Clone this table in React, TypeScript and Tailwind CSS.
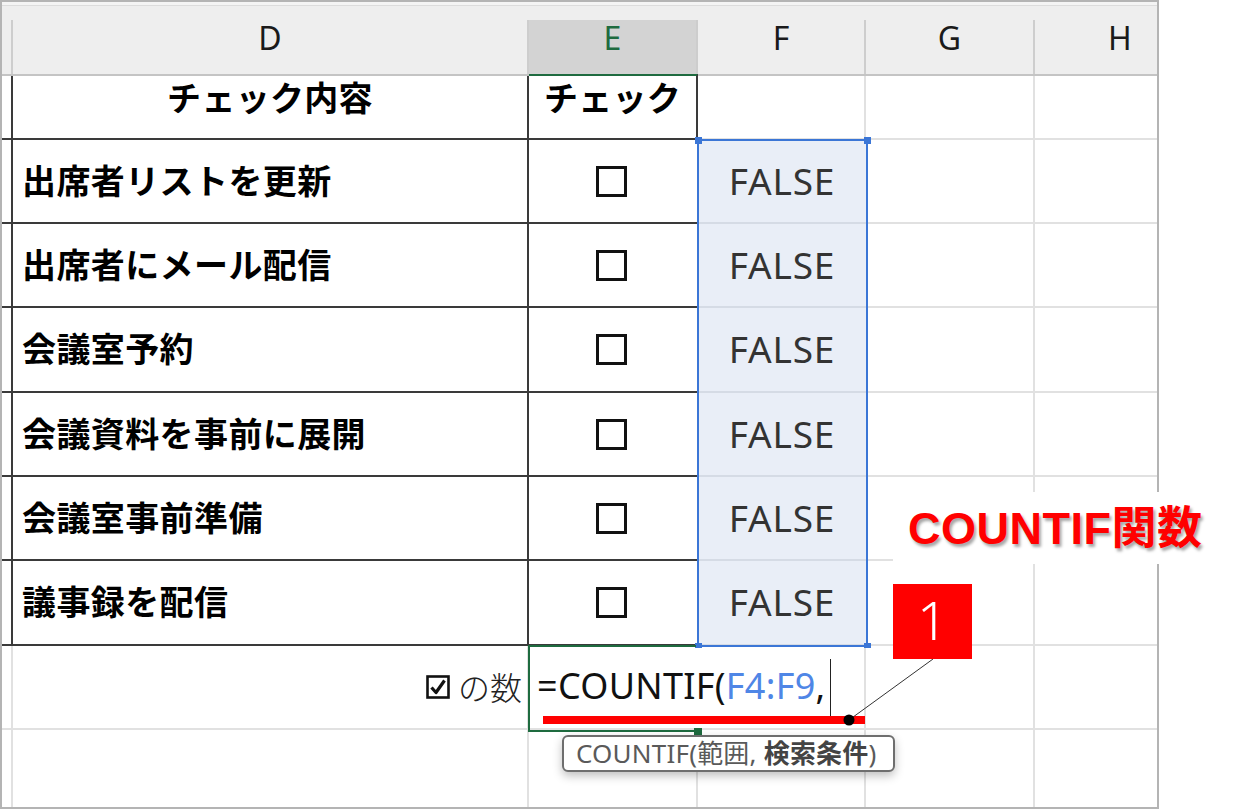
import React from "react";

const JP = "font-['Noto_Sans_CJK_JP','Noto_Sans',sans-serif]";
const LAT = "font-['Noto_Sans','Noto_Sans_CJK_JP',sans-serif]";

const items = [
  { t: "出席者リストを更新", h: "h-[84px]" },
  { t: "出席者にメール配信", h: "h-[84px]" },
  { t: "会議室予約", h: "h-[85px]" },
  { t: "会議資料を事前に展開", h: "h-[84px]" },
  { t: "会議室事前準備", h: "h-[84px]" },
  { t: "議事録を配信", h: "h-[85px]" },
];

function Cell({ className, children }: { className: string; children?: React.ReactNode }) {
  return <div className={"shrink-0 box-border " + className}>{children}</div>;
}

function HeaderCell({ w, label, active }: { w: string; label: string; active?: boolean }) {
  return (
    <div className={"shrink-0 flex flex-col " + w}>
      <div className="h-[14px]" />
      <div
        className={
          "flex-1 flex items-center justify-center pb-[16px] text-[32px] leading-none border-r-2 border-[#cdcdcd] " +
          (active ? "bg-[#d3d3d3] text-[#1e6b3f]" : "text-[#1a1a1a]")
        }
      >
        <span className="-mt-[2px]">{label}</span>
      </div>
    </div>
  );
}

export default function App() {
  const dark = "border-[#3a3a3a]";
  return (
    <div className={"relative w-[1240px] h-[810px] bg-white overflow-hidden " + JP}>
      {/* spreadsheet frame */}
      <div className="w-[1159px] h-[809px] border-2 border-[#b4b4b4] flex flex-col">
        {/* column header */}
        <div className={"h-[74px] shrink-0 bg-[#eeeeee] flex flex-col border-b-2 border-[#c4c4c4] " + LAT}>
          <div className="h-[4px] bg-[#f4f4f4] border-b border-[#dcdcdc]" />
          <div className="flex flex-1">
            <HeaderCell w="w-[11px]" label="" />
            <HeaderCell w="w-[516px]" label="D" />
            <HeaderCell w="w-[169px]" label="E" active />
            <HeaderCell w="w-[168px]" label="F" />
            <HeaderCell w="w-[169px]" label="G" />
            <div className="shrink-0 w-[122px] flex flex-col">
              <div className="h-[14px]" />
              <div className="flex-1 flex items-center pl-[73px] pb-[16px] text-[32px] leading-none text-[#1a1a1a]">
                <span className="-mt-[2px]">H</span>
              </div>
            </div>
          </div>
        </div>

        {/* row 3 */}
        <div className="flex h-[64px] shrink-0">
          <Cell className={"w-[11px] border-r-2 border-b-2 " + dark} />
          <Cell className={"w-[516px] border-r-2 border-b-2 flex justify-center pt-[4px] " + dark}>
            <span className="text-[34px] leading-[34px] font-bold text-black tracking-[0.3px]">チェック内容</span>
          </Cell>
          <Cell className={"w-[169px] border-r-2 border-b-2 flex justify-center pt-[4px] border-t-2 border-t-[#1e6b3f] -mt-[2px] " + dark}>
            <span className="text-[34px] leading-[34px] font-bold text-black tracking-[0.3px]">チェック</span>
          </Cell>
          <Cell className="w-[168px] border-r-2 border-b-2 border-[#e1e1e1]" />
          <Cell className="w-[169px] border-r-2 border-b-2 border-[#e1e1e1]" />
          <Cell className="w-[122px] border-b-2 border-[#e1e1e1]" />
        </div>

        {/* data rows */}
        {items.map((it) => (
          <div key={it.t} className={"flex shrink-0 " + it.h}>
            <Cell className={"w-[11px] border-r-2 border-b-2 " + dark} />
            <Cell className={"w-[516px] border-r-2 border-b-2 flex items-center pl-[9px] " + dark}>
              <span className="text-[34px] leading-none font-bold text-black tracking-[0.4px] -mt-[3px]">{it.t}</span>
            </Cell>
            <Cell className={"w-[169px] border-b-2 flex items-center justify-center pr-[4px] " + dark}>
              <div className="w-[31px] h-[31px] border-[3px] border-[#111]" />
            </Cell>
            <Cell className="w-[168px] bg-[#e9eef7] border-b-2 border-[#d5dbe5] flex items-center justify-center">
              <span className={"text-[37px] leading-none font-normal text-[#333] tracking-[0.8px] -mt-[2px] " + LAT}>FALSE</span>
            </Cell>
            <Cell className="w-[169px] border-r-2 border-b-2 border-[#e1e1e1]" />
            <Cell className="w-[122px] border-b-2 border-[#e1e1e1]" />
          </div>
        ))}

        {/* row 10 */}
        <div className="flex h-[84px] shrink-0">
          <Cell className="w-[11px] border-r-2 border-b-2 border-[#e1e1e1]" />
          <Cell className="w-[516px] border-r-2 border-b-2 border-[#e1e1e1] flex items-center justify-end pr-[5px]">
            <svg width="24" height="24" viewBox="0 0 24 24" className="mr-[8px]">
              <rect x="1.5" y="1.5" width="21" height="21" fill="none" stroke="#111" strokeWidth="2.6" />
              <path d="M5.5 12.5 L10 17.5 L18.5 5.5" fill="none" stroke="#111" strokeWidth="3.2" strokeLinejoin="round" />
            </svg>
            <span className="text-[32px] leading-none font-light text-[#222] -mt-[2px]">の数</span>
          </Cell>
          <Cell className="w-[169px] border-b-2 border-[#e1e1e1] flex items-center pl-[8px] overflow-visible">
            <span className={"whitespace-nowrap text-[36px] leading-none text-[#111] tracking-[0.3px] -mt-[2px] " + LAT}>
              =COUNTIF(<span className="text-[#4f86e6]">F4:F9</span>,
            </span>
          </Cell>
          <Cell className="w-[168px] border-r-2 border-b-2 border-[#e1e1e1]" />
          <Cell className="w-[169px] border-r-2 border-b-2 border-[#e1e1e1]" />
          <Cell className="w-[122px] border-b-2 border-[#e1e1e1]" />
        </div>

        {/* row 11 */}
        <div className="flex flex-1">
          <Cell className="w-[11px] border-r-2 border-[#e1e1e1]" />
          <Cell className="w-[516px] border-r-2 border-[#e1e1e1]" />
          <Cell className="w-[169px] border-r-2 border-[#e1e1e1]" />
          <Cell className="w-[168px] border-r-2 border-[#e1e1e1]" />
          <Cell className="w-[169px] border-r-2 border-[#e1e1e1]" />
          <Cell className="w-[122px]" />
        </div>
      </div>

      {/* selection range F4:F9 */}
      <div className="absolute left-[697px] top-[139px] w-[171px] h-[508px] border-2 border-[#3b76d6] pointer-events-none" />
      <div className="absolute left-[695px] top-[137px] w-[7px] h-[7px] bg-[#3b76d6]" />
      <div className="absolute left-[864px] top-[137px] w-[7px] h-[7px] bg-[#3b76d6]" />
      <div className="absolute left-[695px] top-[643px] w-[7px] h-[5px] bg-[#3b76d6]" />
      <div className="absolute left-[864px] top-[643px] w-[7px] h-[5px] bg-[#3b76d6]" />

      {/* active cell E10 */}
      <div className="absolute left-[528px] top-[645px] w-[168px] h-[87px] border-l-2 border-t-2 border-b-2 border-[#1e6b3f] pointer-events-none" />
      <div className="absolute left-[694px] top-[728px] w-[8px] h-[7px] bg-[#1e6b3f]" />

      {/* caret */}
      <div className="absolute left-[830px] top-[659px] w-[1px] h-[57px] bg-[#222]" />

      {/* annotation drawings */}
      <svg className="absolute left-0 top-0 pointer-events-none" width="1240" height="810">
        <rect x="543" y="716" width="322" height="8" fill="#ff0000" />
        <line x1="849" y1="720" x2="933" y2="659" stroke="#333" strokeWidth="1" />
        <circle cx="849" cy="720" r="5.5" fill="#000" />
      </svg>

      {/* number badge */}
      <div className={"absolute left-[893px] top-[584px] w-[79px] h-[75px] bg-[#ff0000] flex items-center justify-center text-white text-[54px] leading-none font-light " + LAT}>
        <span className="-mt-[6px]">1</span>
      </div>

      {/* label */}
      <div className="absolute left-[893px] top-[492px] w-[332px] h-[72px] bg-white flex items-center pl-[15px]">
        <span className="font-['Liberation_Sans','Noto_Sans_CJK_JP',sans-serif] font-bold text-[45px] leading-none text-[#ff0000] tracking-[0.5px] [text-shadow:2px_3px_3px_rgba(0,0,0,0.35)]">
          COUNTIF関数
        </span>
      </div>

      {/* tooltip */}
      <div className="absolute left-[562px] top-[735px] w-[333px] h-[37px] bg-white border-2 border-[#6e6e6e] rounded-[6px] shadow-[0_4px_10px_rgba(0,0,0,0.25)] flex items-center pl-[12px]">
        <span className={"text-[26px] leading-none whitespace-nowrap text-[#5a5a5a] tracking-[0.2px] -mt-[2px] " + LAT}>
          COUNTIF(範囲, <span className="font-bold text-[#444]">検索条件</span>)
        </span>
      </div>
    </div>
  );
}
